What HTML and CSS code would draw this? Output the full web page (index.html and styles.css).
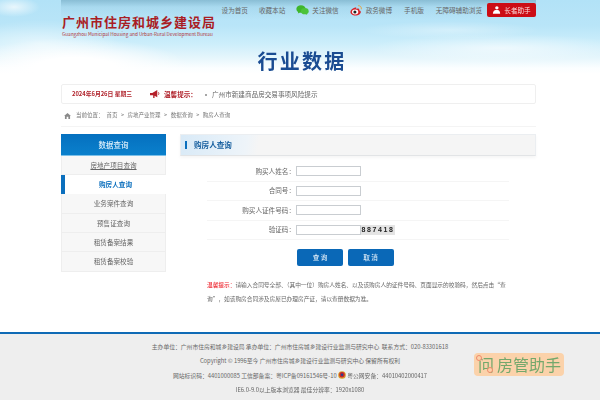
FILE: index.html
```html
<!DOCTYPE html>
<html lang="zh-CN">
<head>
<meta charset="utf-8">
<title>购房人查询</title>
<link rel="stylesheet" href="styles.css">
</head>
<body>
<header class="hero">
  <div class="wrap top">
    <div class="logo">
      <div class="logo-cn">广州市住房和城乡建设局</div>
      <div class="logo-en">Guangzhou Municipal Housing and Urban-Rural Development Bureau</div>
    </div>
    <nav class="tools">
      <a class="tool t1">设为首页</a>
      <a class="tool t2">收藏本站</a>
      <a class="tool t3"><svg class="ic-wx" viewBox="0 0 16 13"><ellipse cx="6" cy="5.2" rx="6" ry="5" fill="#3fb62c"/><path d="M2.5 8.5 2 11l3-1.6z" fill="#3fb62c"/><ellipse cx="11" cy="8" rx="5" ry="4.1" fill="#4cc33a"/><path d="M13.5 11l.7 1.8-2.4-1.2z" fill="#4cc33a"/></svg>关注微信</a>
      <a class="tool t4"><svg class="ic-wb" viewBox="0 0 14 13"><path d="M6 3C3 3.6.4 6 .4 8.3.4 10.900 3.400 12.500 6.300 12.500c3.500 0 6.400-2 6.400-4.200 0-1.500-1.300-1.900-2-2.100.4-1 .3-2-1.100-2.200-.9-.1-2 .5-2.300.6C7.600 3.400 7.300 2.800 6 3z" fill="#d8232a"/><ellipse cx="6" cy="8.300" rx="3.700" ry="2.900" fill="#fff"/><circle cx="5.700" cy="8.300" r="1.800" fill="#222"/><path d="M9.500.8c2.500-.3 4.300 1.800 3.800 4.300" fill="none" stroke="#e8a33a" stroke-width="1.100"/></svg>政务微博</a>
      <a class="tool t5">手机版</a>
      <a class="tool t6">无障碍辅助浏览</a>
      <a class="elder"><svg class="ic-elder" viewBox="0 0 12 11"><circle cx="6.500" cy="2.500" r="2.300" fill="#fff"/><path d="M1 10.500c0-3 2-5 4-5h2.500c2 0 3.500 2 3.500 5z" fill="#fff"/></svg>长者助手</a>
    </nav>
  </div>
  <h1 class="hero-title">行业数据</h1>
</header>

<div class="wrap">
  <div class="notice">
    <span class="date">2024年6月26日 星期三</span>
    <svg class="ic-horn" viewBox="0 0 11 10"><path d="M0 4h2.500L8 .5v8L5 6.800V9.500H3.500V6.500H0z" fill="#b5202a"/><path d="M9 3c1 .6 1 2.400 0 3" fill="none" stroke="#b5202a"/></svg>
    <span class="notice-label">温馨提示&#xFF1A;</span>
    <span class="notice-text">广州市新建商品房交易事项风险提示</span>
  </div>

  <div class="crumb">
    <svg class="ic-home" viewBox="0 0 8 7"><path d="M4 0 8 3.500H7V7H5V4.500H3V7H1V3.500H0z" fill="#8a8a8a"/></svg>
    <span class="crumb-here">当前位置&#xFF1A;</span>
    <span>首页</span><i>&gt;</i><span>房地产业管理</span><i>&gt;</i><span>数据查询</span><i>&gt;</i><span>购房人查询</span>
  </div>

  <div class="content">
    <aside class="side">
      <div class="side-title">数据查询</div>
      <a class="side-item side-link">房地产项目查询</a>
      <a class="side-item side-active">购房人查询</a>
      <a class="side-item">业务案件查询</a>
      <a class="side-item">预售证查询</a>
      <a class="side-item">租赁备案结果</a>
      <a class="side-item">租赁备案校验</a>
    </aside>

    <main class="main">
      <h2 class="main-head">购房人查询</h2>
      <form class="form">
        <div class="row"><label>购买人姓名&#xFF1A;</label><input type="text"></div>
        <div class="row"><label>合同号&#xFF1A;</label><input type="text"></div>
        <div class="row"><label>购买人证件号码&#xFF1A;</label><input type="text"></div>
        <div class="row"><label>验证码&#xFF1A;</label><input type="text"><span class="captcha">887418</span></div>
        <div class="actions"><button type="button" class="btn">查 询</button><button type="button" class="btn">取 消</button></div>
      </form>
      <p class="tip"><b>温馨提示&#xFF1A;</b>请输入合同号全部、&#xFF08;其中一位&#xFF09;购房人姓名、以及该购房人的证件号码、页面显示的校验码&#xFF0C;然后点击“查询”&#xFF0C;如该购房合同涉及房屋已办理房产证&#xFF0C;请以查册数据为准。</p>
    </main>
  </div>
</div>

<footer class="footer">
  <p>主办单位&#xFF1A;广州市住房和城乡建设局 承办单位&#xFF1A;广州市住房城乡建设行业监测与研究中心&nbsp;&nbsp;联系方式&#xFF1A;020-83301618</p>
  <p>Copyright © 1996至今 广州市住房城乡建设行业监测与研究中心 保留所有权利</p>
  <p>网站标识码&#xFF1A;4401000085 工信部备案&#xFF1A;粤ICP备09161546号-10 <svg class="ic-police" viewBox="0 0 10 10"><circle cx="5" cy="5" r="4.800" fill="#d9a02c"/><circle cx="5" cy="4.600" r="3.400" fill="#c8262c"/><circle cx="5" cy="4.600" r="1.500" fill="#26418f"/></svg> 粤公网安备&#xFF1A;44010402000417</p>
  <p>IE6.0-9.0以上版本浏览器 最佳分辨率&#xFF1A;1920x1080</p>
</footer>

<div class="helper">
  <span class="helper-q">问<i class="dot dot-a"></i><i class="dot dot-b"></i></span><span>房管助手</span>
</div>
</body>
</html>
```
FILE: styles.css
```css
* { box-sizing: border-box; }
html, body { margin: 0; padding: 0; height: 400px; overflow: hidden; }
body {
  position: relative;
  background: #fff;
  color: #555;
  font-family: "Noto Sans CJK SC", "Liberation Sans", sans-serif;
  font-size: 6.600px;
  line-height: 1;
  filter: blur(.3px);
}
.wrap { width: 475px; margin-left: 61px; }

/* header */
.hero {
  height: 84px;
  background:
    radial-gradient(ellipse 26px 10px at 14px 7px, rgba(255,255,255,.7), rgba(255,255,255,0)),
    radial-gradient(ellipse 80px 24px at 40px 44px, rgba(255,255,255,.5), rgba(255,255,255,0)),
    radial-gradient(ellipse 115px 30px at 75px 68px, #fff 35%, rgba(255,255,255,0)),
    radial-gradient(ellipse 130px 14px at 500px 48px, rgba(255,255,255,.6), rgba(255,255,255,0)),
    radial-gradient(ellipse 90px 9px at 450px 30px, rgba(255,255,255,.35), rgba(255,255,255,0)),
    linear-gradient(180deg, #b2e2f7 0, #b9e5f8 26px, #cdeefb 44px, #e6f6fc 58px, #fbfeff 68px, #fff 74px);
}
.top {
  display: flex; justify-content: space-between; height: 45px;
  background: linear-gradient(180deg, rgba(110,165,190,.6), rgba(130,185,210,.22) 7px, rgba(150,200,225,0) 20px);
}
.logo { padding-top: 14px; }
.logo-cn { color: #a91d24; font-size: 13px; font-weight: 700; letter-spacing: 1px; line-height: 16px; white-space: nowrap; padding-left: 1px; }
.logo-en { color: #b0353a; font-size: 4.700px; line-height: 5px; margin-top: 2px; white-space: nowrap; padding-left: 1px; }
.tools { display: flex; align-items: flex-start; padding-top: 3px; color: #666; white-space: nowrap; }
.tool { display: flex; align-items: center; height: 14px; }
.t1 { margin-right: 11px; }
.t2 { margin-right: 11px; }
.t3 { margin-right: 11px; }
.t4 { margin-right: 12px; }
.t5 { margin-right: 12px; }
.t6 { margin-right: 5px; }
.ic-wx { width: 13px; height: 10px; margin-right: 3px; }
.ic-wb { width: 12px; height: 11px; margin-right: 4px; }
.elder {
  display: flex; align-items: center; justify-content: center;
  width: 49px; height: 14px; background: #cc0d15; border-radius: 2px;
  color: #fbdcdc; font-size: 6.600px;
}
.ic-elder { width: 9px; height: 8px; margin-right: 3px; }
.hero-title {
  margin: 5px 0 0; text-align: center; color: #1a4c92;
  font-size: 20px; font-weight: 700; letter-spacing: 2.200px; line-height: 22px;
  padding-left: 4px;
}

/* notice */
.notice {
  display: flex; align-items: center; height: 20px; padding-left: 10px;
  border: 1px solid #efefef; border-radius: 2px; background: #fff;
}
.date { color: #b0222b; font-size: 5.800px; font-weight: 700; width: 66px; white-space: nowrap; }
.ic-horn { width: 10px; height: 10px; margin: 0 4px 0 12px; }
.notice-label { color: #b0222b; font-size: 6.600px; font-weight: 700; width: 41px; white-space: nowrap; }
.notice-text { position: relative; padding-left: 7px; color: #666; white-space: nowrap; }
.notice-text::before { content: ""; position: absolute; left: 0; top: 3px; width: 2px; height: 2px; background: #888; border-radius: 50%; }

/* breadcrumb */
.crumb {
  display: flex; align-items: center; height: 23px; padding: 1px 0 0 3px;
  border-bottom: 1px solid #f4f4f4; color: #777; font-size: 5.500px; white-space: nowrap;
}
.ic-home { width: 7px; height: 6px; margin-right: 5px; }
.crumb-here { margin-right: 3px; }
.crumb i { font-style: normal; margin: 0 3.500px; }

/* layout */
.content { display: flex; gap: 14px; padding-top: 7px; }

/* sidebar */
.side { width: 105px; flex: none; }
.side-title {
  height: 21.500px; line-height: 21px; text-align: center; color: #dff0fb; font-size: 7.500px; font-weight: 500;
  background: linear-gradient(180deg, #0570bf, #0a80cc);
  border-bottom: 1px solid #7cc0e8;
}
.side-item {
  display: block; height: 19.400px; line-height: 18.400px; text-align: center; color: #666; background: #f7f7f7;
  border: 1px solid #eee; border-top: 0; white-space: nowrap;
}
.side-link { text-decoration: underline; }
.side-active {
  background: #fff; color: #0b6fbd; font-weight: 700; border: 0; border-left: 4px solid #0b6fbd;
  line-height: 19.400px;
}

/* main */
.main { flex: 1; min-width: 0; }
.main-head {
  display: flex; align-items: center; height: 21.500px; margin: 0; padding-left: 13px; position: relative;
  color: #175f9f; font-size: 7.600px; font-weight: 700;
  background: linear-gradient(100deg, #d9eaf7 0, #e7f1f9 45px, #eef4f9 66px, #f5f5f5 78px);
  border: 1px solid #ebeef1; border-bottom: 1px solid #e2e4e6;
  box-shadow: 0 2px 3px rgba(0,0,0,.04);
}
.main-head::before { content: ""; position: absolute; left: 4px; top: 6px; width: 2px; height: 8px; background: #0b6fbd; }

/* form */
.form { margin-top: 6.500px; }
.row {
  display: flex; align-items: center; height: 19.500px; margin-left: 27px; margin-right: 27px;
  border-bottom: 1px solid #f5f5f5;
}
.row label { width: 89px; text-align: right; padding-right: 1px; color: #666; white-space: nowrap; flex: none; }
.row input { width: 65px; height: 10px; padding: 0; border: 1px solid #c9cdd1; background: #fff; border-radius: 0; flex: none; }
.captcha {
  width: 34px; height: 10px; text-align: center; background: #e4e4e4; color: #222;
  font: 700 7px/10px "Liberation Sans", sans-serif; letter-spacing: 1.600px;
}
.actions { display: flex; gap: 4.500px; padding: 9px 0 0 117px; }
.btn {
  width: 46px; height: 17px; padding: 0; border: 0; border-radius: 2px; background: #0a68b7; color: #dcebf7;
  font: 500 6.600px/17px "Noto Sans CJK SC", sans-serif;
}
.tip { margin: 12px 0 0; padding: 0 26px 0 27px; line-height: 14px; color: #666; font-size: 5.700px; }
.tip b { color: #ee2a33; font-weight: 500; }

/* footer */
.footer {
  position: absolute; left: 0; right: 0; top: 332px; height: 68px; padding-top: 6px;
  border-top: 2px solid #0f6ab5; background: #eee; color: #666; text-align: center;
}
.footer p { margin: 0; height: 14.300px; line-height: 14.300px; font-size: 5.800px; white-space: nowrap; }
.ic-police { width: 8px; height: 8px; vertical-align: -1.500px; }

/* helper */
.helper {
  position: absolute; left: 474px; top: 353px; width: 90px; height: 23px;
  display: flex; align-items: center; padding-left: 4px; gap: 3px;
  background: #fbd2aa; border-radius: 4px; color: #74a86c; font-size: 16px; line-height: 23px; white-space: nowrap;
}
.helper-q { position: relative; }
.dot { position: absolute; width: 6px; height: 6px; border: 1.500px solid #f08a6a; border-radius: 50%; background: #fbd2aa; }
.dot-a { left: -2px; top: 2px; }
.dot-b { right: 1px; top: 14px; }
```
